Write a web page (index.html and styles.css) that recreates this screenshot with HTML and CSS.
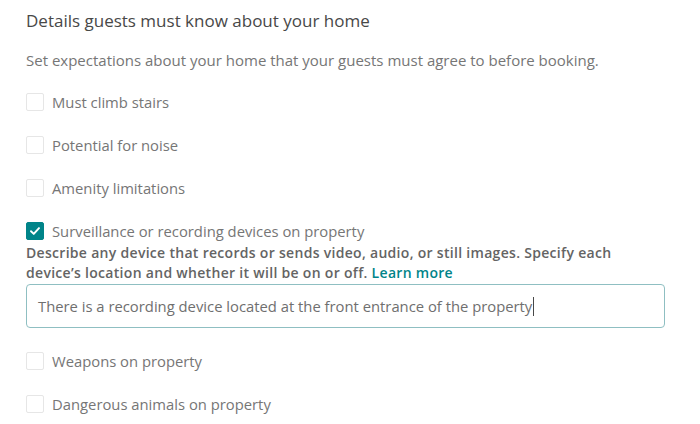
FILE: index.html
```html
<!DOCTYPE html>
<html lang="en">
<head>
<meta charset="utf-8">
<title>Details guests must know</title>
<link rel="stylesheet" href="styles.css">
</head>
<body>
<main class="section">
  <h2 class="title">Details guests must know about your home</h2>
  <p class="subtitle">Set expectations about your home that your guests must agree to before booking.</p>
  <ul class="options">
    <li class="option"><span class="box"></span><span class="label">Must climb stairs</span></li>
    <li class="option"><span class="box"></span><span class="label">Potential for noise</span></li>
    <li class="option"><span class="box"></span><span class="label">Amenity limitations</span></li>
    <li class="option-group">
      <div class="option"><span class="box checked"><svg viewBox="0 0 18 18" width="18" height="18"><path d="M4.5 9.3 L7.6 12.2 L13.5 5.8" fill="none" stroke="#fff" stroke-width="2.2" stroke-linecap="round" stroke-linejoin="round"/></svg></span><span class="label">Surveillance or recording devices on property</span></div>
      <p class="desc">Describe any device that records or sends video, audio, or still images. Specify each device’s location and whether it will be on or off. <a class="link" href="#">Learn more</a></p>
      <div class="field"><span class="field-text">There is a recording device located at the front entrance of the property</span><span class="caret"></span></div>
    </li>
    <li class="option spaced"><span class="box"></span><span class="label">Weapons on property</span></li>
    <li class="option"><span class="box"></span><span class="label">Dangerous animals on property</span></li>
  </ul>
</main>
</body>
</html>
```

FILE: styles.css
```css
html, body {
  margin: 0;
  padding: 0;
  background: #ffffff;
}
body {
  font-family: "Open Sans", "Liberation Sans", sans-serif;
  color: #484848;
}
.section {
  padding: 9px 35px 0 26px;
}
.title {
  margin: 0;
  font-size: 17px;
  line-height: 24px;
  font-weight: 400;
  color: #484848;
}
.subtitle {
  margin: 16px 0 0;
  font-size: 15px;
  line-height: 22px;
  color: #767676;
}
.options {
  list-style: none;
  margin: 20px 0 0;
  padding: 0;
  display: flex;
  flex-direction: column;
  gap: 21px;
}
.option {
  display: flex;
  align-items: center;
  gap: 8px;
  height: 22px;
}
.box {
  width: 16px;
  height: 16px;
  border: 1px solid #e6e6e6;
  border-radius: 2px;
  flex: none;
  display: flex;
  align-items: center;
  justify-content: center;
  box-sizing: content-box;
}
.box.checked {
  background: #008489;
  border-color: #008489;
}
.box svg {
  width: 16px;
  height: 16px;
}
.label {
  font-size: 14.8px;
  line-height: 22px;
  color: #767676;
}
.desc {
  margin: 1px 0 0;
  font-size: 14px;
  line-height: 20px;
  font-weight: 600;
  letter-spacing: 0.3px;
  color: #646464;
}
.link {
  color: #008489;
  text-decoration: none;
}
.field {
  margin-top: 1px;
  height: 42px;
  border: 1px solid #8fbfc2;
  border-radius: 4px;
  display: flex;
  align-items: center;
  padding: 0 11px;
}
.field-text {
  font-size: 14.8px;
  color: #6f6f6f;
}
.caret {
  width: 1px;
  height: 19px;
  background: #484848;
  margin-left: 1px;
}
.spaced {
  margin-top: 1px;
}
```
